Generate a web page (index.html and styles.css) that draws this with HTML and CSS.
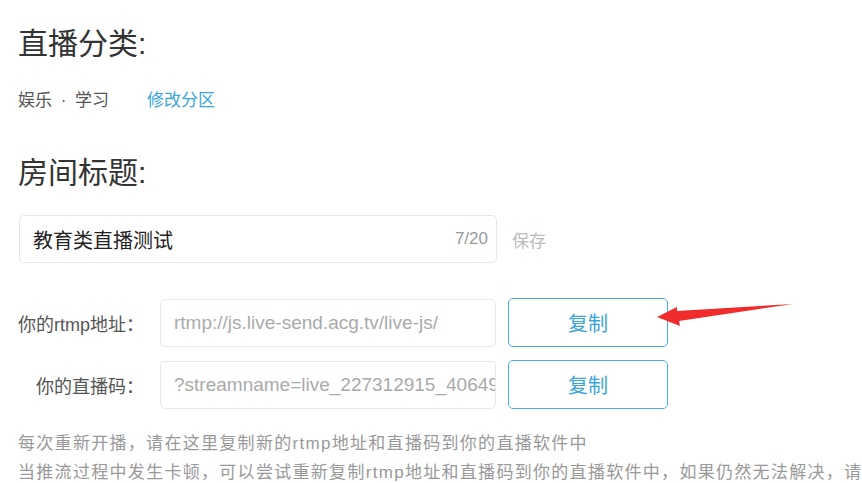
FILE: index.html
```html
<!DOCTYPE html>
<html lang="zh-CN">
<head>
<meta charset="utf-8">
<link rel="stylesheet" href="styles.css">
</head>
<body>
<div class="page">
  <section class="section">
    <h2 class="heading">直播分类:</h2>
    <div class="category">
      <span class="cat-name">娱乐 · 学习</span>
      <a class="link">修改分区</a>
    </div>
  </section>
  <section class="section title-section">
    <h2 class="heading">房间标题:</h2>
    <div class="title-row">
      <div class="title-input">
        <span class="title-text">教育类直播测试</span>
        <span class="count">7/20</span>
      </div>
      <span class="save">保存</span>
    </div>
  </section>
  <div class="stream">
    <div class="stream-row">
      <span class="label">你的rtmp地址：</span>
      <div class="field">rtmp://js.live-send.acg.tv/live-js/</div>
      <button class="copy">复制</button>
      <svg class="arrow" width="150" height="30" viewBox="0 0 150 30">
        <polygon points="0,17 20,7 20,11 136,4 22,21 23,26" fill="#f02b2b"/>
      </svg>
    </div>
    <div class="stream-row">
      <span class="label">你的直播码：</span>
      <div class="field">?streamname=live_227312915_4064913&amp;key=</div>
      <button class="copy">复制</button>
    </div>
  </div>
  <div class="notes">
    <p>每次重新开播，请在这里复制新的rtmp地址和直播码到你的直播软件中</p>
    <p>当推流过程中发生卡顿，可以尝试重新复制rtmp地址和直播码到你的直播软件中，如果仍然无法解决，请联系客服</p>
  </div>
</div>
</body>
</html>
```
FILE: styles.css
```css
* { box-sizing: border-box; }
html, body { margin: 0; padding: 0; background: #fff; overflow: hidden; }
body {
  font-family: "Liberation Sans", "Noto Sans CJK SC", sans-serif;
  color: #333;
}
.page {
  padding: 24px 0 0 18px;
  width: 862px;
  height: 483px;
  overflow: hidden;
}
.heading {
  margin: 0;
  font-weight: normal;
  font-size: 30px;
  line-height: 40px;
  color: #333;
}
.category {
  margin-top: 25px;
  display: flex;
  align-items: center;
  font-size: 17px;
  line-height: 24px;
}
.cat-name { color: #555; word-spacing: 4px; }
.link { color: #3aa6dc; margin-left: 38px; }
.title-section { margin-top: 40px; }
.title-row {
  margin-top: 22px;
  display: flex;
  align-items: center;
}
.title-input {
  width: 478px;
  height: 48px;
  margin-left: 1px;
  border: 1px solid #e6e6e6;
  border-radius: 5px;
  display: flex;
  align-items: center;
  justify-content: space-between;
  padding: 0 8px 0 13px;
}
.title-text { font-size: 20px; color: #222; }
.count { font-size: 17px; color: #999; }
.save { margin-left: 15px; font-size: 17px; color: #bbb; }
.stream { margin-top: 35px; display: flex; flex-direction: column; gap: 13px; }
.stream-row { display: flex; align-items: center; position: relative; }
.label {
  width: 126px;
  text-align: right;
  font-size: 18px;
  color: #555;
  white-space: nowrap;
}
.field {
  margin-left: 16px;
  width: 336px;
  height: 48px;
  border: 1px solid #e8e8e8;
  border-radius: 5px;
  padding: 0 0 0 13px;
  font-size: 19px;
  line-height: 46px;
  color: #aaa;
  white-space: nowrap;
  overflow: hidden;
}
.copy {
  margin-left: 12px;
  width: 160px;
  height: 49px;
  border: 1.5px solid #4aaedf;
  border-radius: 5px;
  background: #fff;
  font-family: "Noto Sans CJK SC", sans-serif;
  font-size: 20px;
  color: #3aa6dc;
  padding: 0;
}
.arrow {
  position: absolute;
  left: 639px;
  top: 2px;
}
.notes {
  margin-top: 20px;
  font-size: 17px;
  letter-spacing: 1.3px;
  color: #999;
  white-space: nowrap;
}
.notes p { margin: 0; line-height: 29px; }
```
